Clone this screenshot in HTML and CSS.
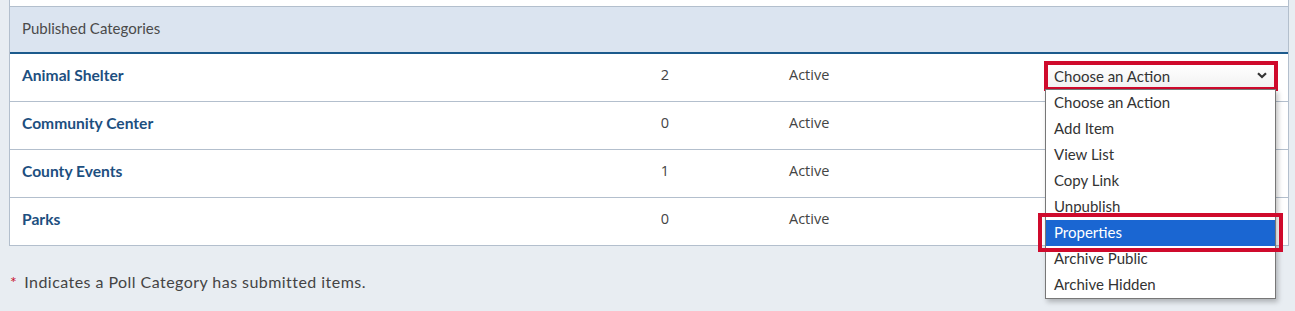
FILE: index.html
```html
<!DOCTYPE html>
<html lang="en">
<head>
<meta charset="utf-8">
<title>Published Categories</title>
<link rel="stylesheet" href="styles.css">
</head>
<body>
<div class="panel">
  <div class="top-strip"></div>
  <div class="table-head">Published Categories</div>
  <div class="row">
    <a class="name" href="#">Animal Shelter</a>
    <span class="count">2</span>
    <span class="status">Active</span>
    <div class="action">
      <div class="select-wrap">
        <div class="select">
          <span>Choose an Action</span>
          <svg class="chev" width="10" height="7" viewBox="0 0 10 7"><path d="M1 1.2 L5 5 L9 1.2" fill="none" stroke="#333" stroke-width="2.2"/></svg>
        </div>
      </div>
      <div class="menu">
        <div class="opt">Choose an Action</div>
        <div class="opt">Add Item</div>
        <div class="opt">View List</div>
        <div class="opt">Copy Link</div>
        <div class="opt">Unpublish</div>
        <div class="opt selected">Properties</div>
        <div class="opt">Archive Public</div>
        <div class="opt">Archive Hidden</div>
        <div class="mark"></div>
      </div>
    </div>
  </div>
  <div class="row">
    <a class="name" href="#">Community Center</a>
    <span class="count">0</span>
    <span class="status">Active</span>
    <div class="action"></div>
  </div>
  <div class="row">
    <a class="name" href="#">County Events</a>
    <span class="count">1</span>
    <span class="status">Active</span>
    <div class="action"></div>
  </div>
  <div class="row">
    <a class="name" href="#">Parks</a>
    <span class="count">0</span>
    <span class="status">Active</span>
    <div class="action"></div>
  </div>
</div>
<p class="note"><span class="star">*</span>Indicates a Poll Category has submitted items.</p>
</body>
</html>
```
FILE: styles.css
```css
html, body {
  margin: 0;
  padding: 0;
}
body {
  background: #e8edf2;
  font-family: "Lato", "Open Sans", sans-serif;
  color: #444;
  width: 1295px;
  height: 311px;
  overflow: hidden;
}
.panel {
  margin-left: 9px;
  width: 1278px;
  border-left: 1px solid #b3bfcd;
  border-right: 1px solid #b3bfcd;
  border-bottom: 1px solid #b3bfcd;
  background: #fff;
}
.top-strip {
  height: 6px;
  background: #fff;
  border-bottom: 1px solid #b3bfcd;
}
.table-head {
  box-sizing: border-box;
  height: 45px;
  display: flex;
  align-items: center;
  padding: 0 0 4px 12px;
  background: #dbe4f0;
  border-bottom: 2px solid #1c5a8c;
  height: 47px;
  font-size: 15px;
  color: #4a4a4a;
}
.row {
  box-sizing: border-box;
  display: grid;
  grid-template-columns: 588px 110px 324px 234px;
  padding: 0 10px 6px 12px;
  height: 48px;
  align-items: center;
  border-top: 1px solid #b3bfcd;
}
.table-head + .row {
  border-top: none;
  height: 47px;
}
.name {
  font-size: 15.6px;
  font-weight: 700;
  color: #1d4f7f;
  text-decoration: none;
}
.count {
  text-align: center;
  font-family: "Open Sans", sans-serif;
  font-size: 14.5px;
  color: #444;
}
.status {
  padding-left: 69px;
  font-family: "Open Sans", sans-serif;
  font-size: 14.5px;
  color: #444;
}
.action {
  position: relative;
  align-self: start;
  margin-top: 7px;
  height: 30px;
}
.select-wrap {
  border: 4px solid #cf0a2c;
  height: 22px;
}
.select {
  height: 22px;
  display: flex;
  align-items: center;
  justify-content: space-between;
  padding: 0 7px 1px 6px;
  box-sizing: border-box;
  background: linear-gradient(#fff, #f2f2f2);
  font-size: 15px;
  color: #333;
}
.chev {
  display: block;
}
.menu {
  position: absolute;
  left: 1px;
  top: 28px;
  width: 229px;
  border: 1px solid #777;
  background: #fff;
  box-shadow: 2px 3px 5px rgba(0, 0, 0, 0.25);
  z-index: 2;
}
.opt {
  height: 26px;
  line-height: 25px;
  padding-left: 8px;
  font-size: 15px;
  color: #333;
}
.opt.selected {
  background: #1a66d2;
  color: #fff;
}
.mark {
  position: absolute;
  left: -8px;
  top: 123px;
  width: 237px;
  height: 31px;
  border: 4px solid #cf0a2c;
}
.note {
  margin: 0;
  padding: 26px 0 0 10px;
  font-size: 16px;
  letter-spacing: 0.45px;
  color: #444;
}
.star {
  color: #c8102e;
  margin-right: 7px;
}
```
